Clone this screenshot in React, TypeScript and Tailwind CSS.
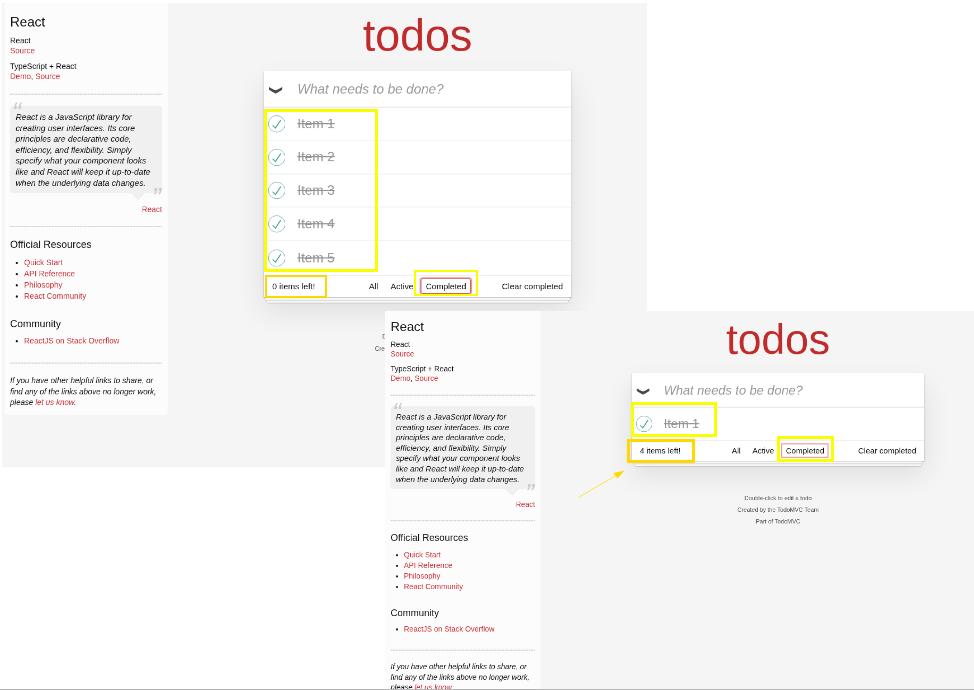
import type { ReactNode } from "react";

type PageProps = {
  items: string[];
  left: number;
  focused?: boolean;
};

function Link({ children }: { children: ReactNode }) {
  return <a className="text-[#c8333a]">{children}</a>;
}

function Divider({ className }: { className: string }) {
  return (
    <div
      className={`h-[2px] bg-[repeating-linear-gradient(90deg,#d2d2d2_0_3px,#ececec_3px_5px)] ${className}`}
    />
  );
}

function LinkList({ links, className }: { links: string[]; className: string }) {
  return (
    <ul className={`list-disc pl-[25px] leading-[20px] ${className}`}>
      {links.map((link) => (
        <li key={link}>
          <Link>{link}</Link>
        </li>
      ))}
    </ul>
  );
}

function Learn() {
  return (
    <aside className="mt-[8px] ml-[8px] h-[738px] w-[292px] shrink-0 rounded-[5px] bg-[#fcfcfc] p-[10px] text-[14px] leading-[18px] text-[#111]">
      <h3 className="mt-[11px] text-[24px] leading-[28px]">React</h3>
      <h5 className="mt-[10px]">React</h5>
      <p><Link>Source</Link></p>
      <h5 className="mt-[10px]">TypeScript + React</h5>
      <p>
        <Link>Demo</Link>, <Link>Source</Link>
      </p>
      <Divider className="mt-[22px]" />
      <blockquote className="relative mt-[20px] rounded-[5px] bg-[#f0f0f0] px-[10px] pt-[10px] pb-[9px] italic">
        <span className="absolute top-[2px] left-[3px] text-[50px] leading-[20px] text-[#cccccc]">“</span>
        <p className="text-[15px] leading-[19.6px] whitespace-nowrap">
          React is a JavaScript library for
          <br />
          creating user interfaces. Its core
          <br />
          principles are declarative code,
          <br />
          efficiency, and flexibility. Simply
          <br />
          specify what your component looks
          <br />
          like and React will keep it up-to-date
          <br />
          when the underlying data changes.
        </p>
        <span className="absolute right-[2px] bottom-[-19px] text-[50px] leading-[20px] text-[#cccccc]">”</span>
        <span className="absolute right-[30px] bottom-[-13px] border-x-[13px] border-t-[13px] border-x-transparent border-t-[#f0f0f0]" />
      </blockquote>
      <p className="mt-[20px] text-right"><Link>React</Link></p>
      <Divider className="mt-[21px]" />
      <h4 className="mt-[19px] text-[18px] leading-[24px]">Official Resources</h4>
      <LinkList
        className="mt-[10px]"
        links={["Quick Start", "API Reference", "Philosophy", "React Community"]}
      />
      <h4 className="mt-[28px] text-[18px] leading-[24px]">Community</h4>
      <LinkList className="mt-[8px]" links={["ReactJS on Stack Overflow"]} />
      <Divider className="mt-[29px]" />
      <p className="mt-[21px] leading-[19.6px] whitespace-nowrap italic">
        If you have other helpful links to share, or
        <br />
        find any of the links above no longer work,
        <br />
        please <Link>let us know</Link>.
      </p>
    </aside>
  );
}

function TodoItem({ title }: { title: string }) {
  return (
    <li className="flex h-[59.8px] items-center border-b-2 border-[#f3f3f3] last:border-b-0">
      <svg className="h-[40px] w-[40px]" viewBox="-10 -18 100 135" fill="none">
        <circle cx="50" cy="50" r="50" stroke="#59A193" strokeWidth="3" />
        <path fill="#3EA390" d="M72 25L42 71 27 56l-4 4 20 20 34-52z" />
      </svg>
      <label className="ml-[20px] text-[24px] leading-[28.8px] text-[#949494] line-through">{title}</label>
    </li>
  );
}

function Todo({ items, left, focused }: PageProps) {
  return (
    <div className="ml-[172px] w-[550px] shrink-0">
      <h1 className="h-[130px] pt-[22px] text-center text-[80px] leading-[90px] text-[#c22b2b]">todos</h1>
      <section className="bg-white shadow-[0_2px_4px_rgba(0,0,0,0.2),0_25px_50px_rgba(0,0,0,0.1)]">
        <div className="flex h-[65px] items-center shadow-[inset_0_-2px_1px_rgba(0,0,0,0.03)]">
          <span className="flex w-[60px] pt-[4px] pl-[9px]">
            <svg className="h-[12px] w-[24px]" viewBox="0 0 24 12">
              <path d="M0 0 Q6 4 12 6 Q18 4 24 0 V5 Q18 9 12 12 Q6 9 0 5 Z" fill="#484848" />
            </svg>
          </span>
          <span className="text-[24px] text-[#999] italic">What needs to be done?</span>
        </div>
        <ul className="border-t border-[#e6e6e6]">
          {items.map((item) => (
            <TodoItem key={item} title={item} />
          ))}
        </ul>
        <footer className="grid h-[40px] grid-cols-[1fr_auto_1fr] items-center border-t-2 border-[#f0f0f0] px-[15px] text-[15px] text-[#111] shadow-[0_1px_1px_rgba(0,0,0,0.2),0_8px_0_-3px_#f6f6f6,0_9px_1px_-3px_rgba(0,0,0,0.2),0_16px_0_-6px_#f6f6f6,0_17px_2px_-6px_rgba(0,0,0,0.2)]">
          <span>{left} items left!</span>
          <nav className="flex gap-[6px] leading-[19px]">
            <a className="border border-transparent px-[7px] py-[3px]">All</a>
            <a className="border border-transparent px-[7px] py-[3px]">Active</a>
            <a
              className={
                focused
                  ? "rounded-[3px] border border-[#d65a5a] px-[7px] py-[3px] shadow-[0_0_2px_2px_#d97b7b]"
                  : "border-2 border-[#eb9c9c] px-[6px] py-[2px]"
              }
            >
              Completed
            </a>
          </nav>
          <span className="text-right">Clear completed</span>
        </footer>
      </section>
      <div className="mt-[65px] flex flex-col gap-[11px] text-center text-[11px] leading-[11px] text-[#4d4d4d]">
        <p>Double-click to edit a todo</p>
        <p>Created by the TodoMVC Team</p>
        <p>Part of TodoMVC</p>
      </div>
    </div>
  );
}

function Page(props: PageProps) {
  return (
    <div className="flex w-[1200px] items-start">
      <Learn />
      <Todo {...props} />
    </div>
  );
}

export default function App() {
  return (
    <main className="relative h-[690px] w-[974px] overflow-hidden bg-white font-['Liberation_Sans',Arial,sans-serif]">
      <div className="absolute top-[3px] left-[2px] h-[464px] w-[645px] overflow-hidden bg-[#f5f5f5]">
        <div className="mt-[-5px] ml-[-2px] origin-top-left scale-[0.559] will-change-transform">
          <Page items={["Item 1", "Item 2", "Item 3", "Item 4", "Item 5"]} left={0} focused />
        </div>
      </div>
      <div className="absolute top-[109px] left-[264px] h-[163px] w-[114px] border-[3px] border-[#faff00]" />
      <div className="absolute top-[275px] left-[265px] h-[23px] w-[62px] border-[2px] border-[#ffd800]" />
      <div className="absolute top-[270px] left-[414px] h-[26px] w-[64px] border-[2px] border-[#faff00]" />

      <div className="absolute top-[311px] left-[385px] h-[378px] w-[589px] overflow-hidden bg-[#f5f5f5]">
        <div className="mt-[-7px] ml-[-4px] origin-top-left scale-x-[0.5315] scale-y-[0.530] will-change-transform">
          <Page items={["Item 1"]} left={4} />
        </div>
      </div>
      <div className="absolute top-[402px] left-[631px] h-[35px] w-[86px] border-[3px] border-[#faff00]" />
      <div className="absolute top-[439px] left-[627px] h-[24px] w-[68px] border-[3px] border-[#ffd800]" />
      <div className="absolute top-[436px] left-[777px] h-[26px] w-[57px] border-[3px] border-[#faff00]" />
      <svg className="absolute top-[466px] left-[574px] h-[36px] w-[54px]" viewBox="574 466 54 36">
        <path d="M578.500 497.300L617 475" stroke="#ffe14a" strokeWidth="1" />
        <path d="M624.500 470.500L613.500 473L617.500 478.500Z" fill="#ffd800" />
      </svg>
      <div className="absolute top-[689px] left-0 h-px w-full bg-[#b5b5b5]" />
    </main>
  );
}
